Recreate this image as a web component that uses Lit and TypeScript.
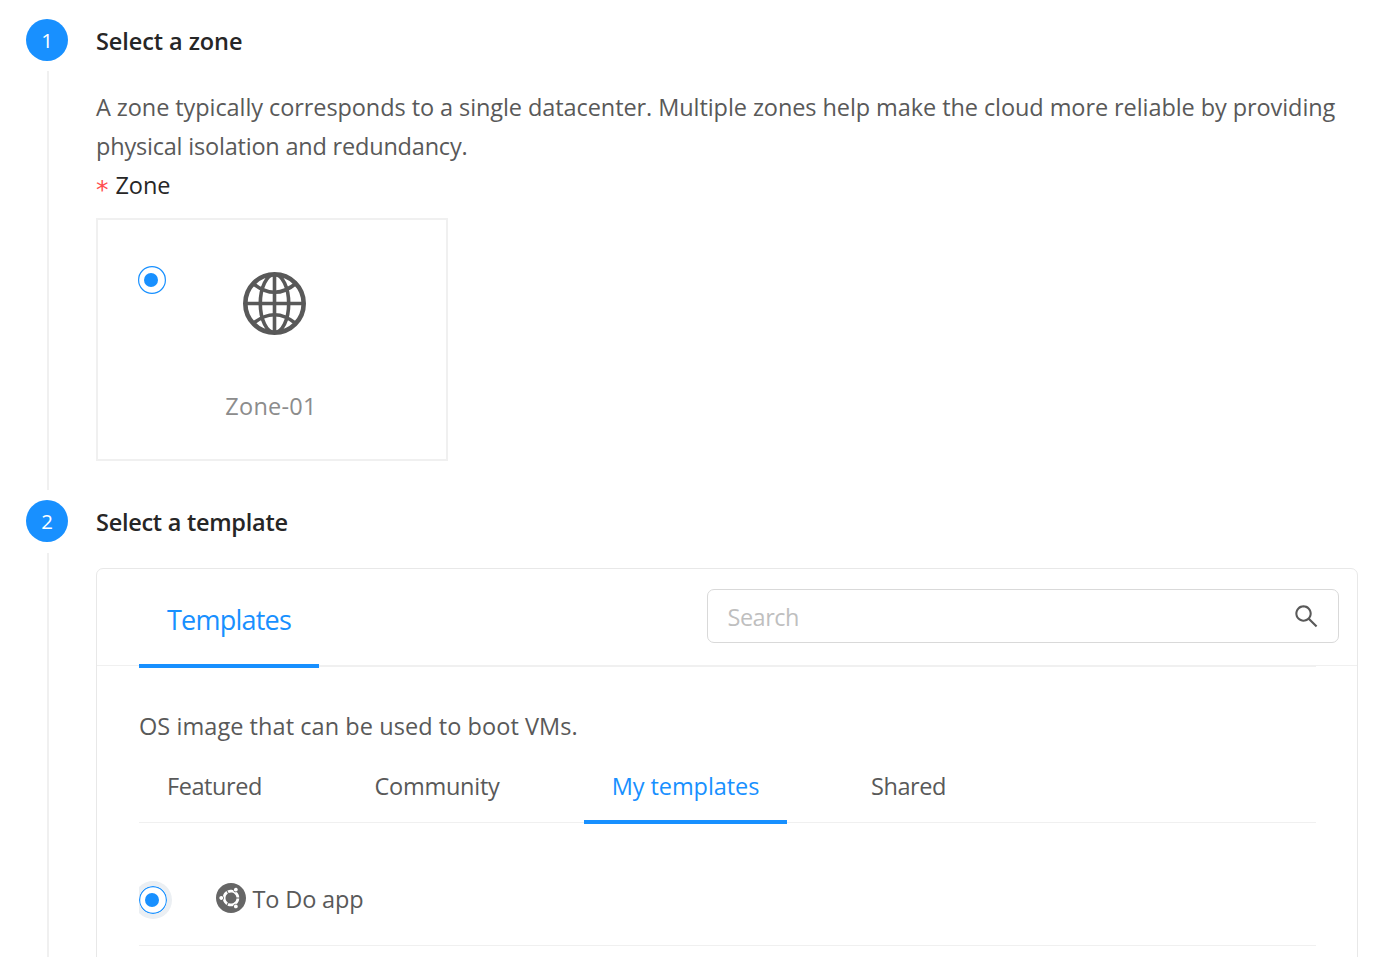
import { LitElement, html, css } from "lit";
import { customElement, state } from "lit/decorators.js";
import { classMap } from "lit/directives/class-map.js";

const globeIcon = html`<svg class="globe" width="64" height="64" viewBox="-32.5 -32.5 64 64" fill="none" stroke="#595959">
  <circle r="29.2" stroke-width="4.6" />
  <ellipse rx="14.2" ry="29" stroke-width="3.6" />
  <path d="M0-30V30M-30 0H30" stroke-width="3.6" />
  <path d="M-22-20.5Q0-2 22-20.5M-22 20.5Q0 2 22 20.5" stroke-width="3.6" />
</svg>`;

const searchIcon = html`<svg class="search-icon" width="24.5" height="24.5" viewBox="64 64 896 896" fill="#595959">
  <path d="M909.6 854.5L649.9 594.8C690.2 542.7 712 479 712 412c0-80.2-31.3-155.4-87.9-212.1-56.6-56.7-132-87.9-212.1-87.9s-155.5 31.3-212.1 87.9C143.2 256.5 112 331.8 112 412c0 80.1 31.3 155.5 87.9 212.1C256.5 680.8 331.8 712 412 712c67 0 130.6-21.8 182.7-62l259.7 259.6a8.2 8.2 0 0011.6 0l43.6-43.5a8.2 8.2 0 000-11.6zM570.4 570.4C528 612.7 471.8 636 412 636s-116-23.3-158.4-65.6C211.3 528 188 471.8 188 412s23.3-116.1 65.6-158.4C296 211.3 352.2 188 412 188s116.1 23.2 158.4 65.6S636 352.2 636 412s-23.3 116.1-65.6 158.4z" />
</svg>`;

const ubuntuIcon = html`<svg class="os-icon" width="30" height="30" viewBox="0 8 496 496" fill="#666">
  <path d="M248 8C111 8 0 119 0 256s111 248 248 248 248-111 248-248S385 8 248 8zm52.7 93c8.8-15.2 28.3-20.5 43.5-11.7 15.3 8.8 20.5 28.3 11.7 43.6-8.8 15.2-28.3 20.5-43.5 11.7-15.3-8.9-20.5-28.4-11.7-43.6zM87.4 287.9c-17.6 0-31.9-14.3-31.9-31.9 0-17.6 14.3-31.9 31.9-31.9 17.6 0 31.9 14.3 31.9 31.9 0 17.6-14.3 31.9-31.9 31.9zm28.1 3.1c22.3-17.9 22.4-51.9 0-69.9 8.6-32.8 29.1-60.7 56.5-79.1l23.7 39.6c-51.5 36.3-51.5 112.5 0 148.8L172 370c-27.4-18.3-47.8-46.3-56.5-79zm228.7 131.7c-15.3 8.8-34.7 3.6-43.5-11.7-8.8-15.3-3.6-34.8 11.7-43.6 15.2-8.8 34.7-3.6 43.5 11.7 8.8 15.3 3.6 34.8-11.7 43.6zm.3-69.5c-26.7-10.3-56.1 6.6-60.5 35-5.2 1.4-48.9 14.3-96.7-9.4l22.5-40.3c57 26.5 123.4-11.7 128.9-74.4l46.1.7c-2.3 34.5-17.3 65.5-40.3 88.4zm-5.9-105.3c-5.4-62-71.3-101.2-128.9-74.4l-22.5-40.3c47.9-23.7 91.5-10.8 96.7-9.4 4.4 28.3 33.8 45.3 60.5 35 23.1 22.9 38 53.9 40.2 88.5l-46 .6z" />
</svg>`;

const radioIcon = html`<svg class="radio" width="28" height="28" viewBox="0 0 28 28">
  <circle cx="14" cy="14" r="13.4" fill="#fff" stroke="#1890ff" stroke-width="1.2" />
  <circle cx="13" cy="14" r="7" fill="#1890ff" />
</svg>`;

const tabs = [
  { name: "Featured", fit: "tight" },
  { name: "Community", fit: "snug" },
  { name: "My templates", fit: "" },
  { name: "Shared", fit: "tight" },
];

@customElement("app-root")
export class AppRoot extends LitElement {
  static styles = css`
    :host {
      display: block;
      height: 957px;
      overflow: hidden;
      background: #fff;
      font-family: "Open Sans", "Noto Sans", sans-serif;
      font-size: 23.5px;
      letter-spacing: -0.08px;
      line-height: 39px;
      color: #595959;
    }
    * { box-sizing: border-box; }
    .steps { display: flex; flex-direction: column; padding: 19px 33px 0 26px; }
    .step { display: grid; grid-template-columns: 42px 1fr; column-gap: 28px; }
    .first { height: 481px; }
    .second { height: 620px; }
    .rail { display: flex; flex-direction: column; align-items: center; }
    .num {
      width: 42px; height: 42px; flex: none; border-radius: 50%;
      background: #1890ff; color: #fff; font-size: 20.5px; line-height: 43px; text-align: center;
    }
    .tail { width: 2px; flex: 1; margin: 10px 0 10px 2px; background: #f0f0f0; }
    .second .tail { margin-top: 11px; }
    .title { height: 42px; line-height: 44px; font-weight: 600; color: #262626; white-space: nowrap; }
    .second .title { letter-spacing: -0.27px; }
    .desc { margin-top: 27px; white-space: nowrap; }
    .desc-end { letter-spacing: -0.2px; }
    .label { color: #262626; display: flex; margin-bottom: 13px; height: 39px; }
    .star { color: #ff4d4f; width: 19.5px; font-family: "DejaVu Sans", sans-serif; font-size: 25px; line-height: 47px; }
    .zone-card {
      width: 352px; height: 243px; border: 2px solid #f0f0f0;
      display: grid; grid-template-rows: 1fr 72px; padding: 46px 41px 0 39px;
    }
    .zone-top { display: flex; align-items: flex-start; padding-left: 1px; }
    .globe { margin: 5px 0 0 76px; }
    .zone-name { color: #8c8c8c; text-align: center; letter-spacing: 0.25px; }
    .card { margin-top: 26px; height: 500px; border: 1px solid #e8e8e8; border-radius: 7px; }
    .card-head {
      height: 97px; border-bottom: 1px solid #f0f0f0; padding: 20px 18px 0 42px;
      display: grid; grid-template-columns: 180px 632px; justify-content: space-between;
    }
    .main-tab { height: 79px; border-bottom: 4px solid #1890ff; color: #1890ff; font-size: 27px; letter-spacing: -0.78px; line-height: 62px; text-align: center; z-index: 1; }
    .search {
      height: 54px; border: 1px solid #d9d9d9; border-radius: 7px; color: #bfbfbf; letter-spacing: -0.5px;
      display: flex; justify-content: space-between; padding: 0 20px 0 19.5px; line-height: 54px;
    }
    .search-icon { margin-top: 14px; }
    .card-body { margin: 0 41px 0 42px; border-top: 1px solid #f0f0f0; padding-top: 40px; }
    .os { letter-spacing: 0.06px; height: 39px; }
    .tabs { display: grid; grid-template-columns: 151px 182px 203px 131px; column-gap: 56px; height: 77px; margin-bottom: -1px; border-bottom: 1px solid #f0f0f0; }
    .tab { height: 78px; text-align: center; line-height: 80px; white-space: nowrap; }
    .tight { letter-spacing: -0.42px; }
    .snug { letter-spacing: -0.25px; }
    .active { color: #1890ff; border-bottom: 4px solid #1890ff; }
    .row { height: 124px; border-bottom: 1px solid #f0f0f0; display: flex; align-items: center; padding-top: 33px; overflow: hidden; }
    .row .radio { border-radius: 50%; box-shadow: 0 0 0 5px #ebeff3; }
    .os-icon { margin: 0 6.5px 4px 49px; }
    .row span { letter-spacing: -0.15px; margin-bottom: 1px; }
  `;

  @state() private active = "My templates";

  render() {
    return html`<div class="steps">
      <section class="step first">
        <div class="rail"><div class="num">1</div><div class="tail"></div></div>
        <div>
          <div class="title">Select a zone</div>
          <div class="desc">
            A zone typically corresponds to a single datacenter. Multiple zones help make the cloud more reliable by providing<br />
            <span class="desc-end">physical isolation and redundancy.</span>
          </div>
          <div class="label"><span class="star">*</span><span>Zone</span></div>
          <div class="zone-card">
            <div class="zone-top">${radioIcon}${globeIcon}</div>
            <div class="zone-name">Zone-01</div>
          </div>
        </div>
      </section>
      <section class="step second">
        <div class="rail"><div class="num">2</div><div class="tail"></div></div>
        <div>
          <div class="title">Select a template</div>
          <div class="card">
            <div class="card-head">
              <div class="main-tab">Templates</div>
              <div class="search"><span>Search</span>${searchIcon}</div>
            </div>
            <div class="card-body">
              <div class="os">OS image that can be used to boot VMs.</div>
              <div class="tabs">
                ${tabs.map(
                  (t) => html`<div
                    class=${classMap({
                      tab: true,
                      tight: t.fit === "tight",
                      snug: t.fit === "snug",
                      active: t.name === this.active,
                    })}
                    @click=${() => (this.active = t.name)}
                  >${t.name}</div>`
                )}
              </div>
              <div class="row">${radioIcon}${ubuntuIcon}<span>To Do app</span></div>
            </div>
          </div>
        </div>
      </section>
    </div>`;
  }
}
